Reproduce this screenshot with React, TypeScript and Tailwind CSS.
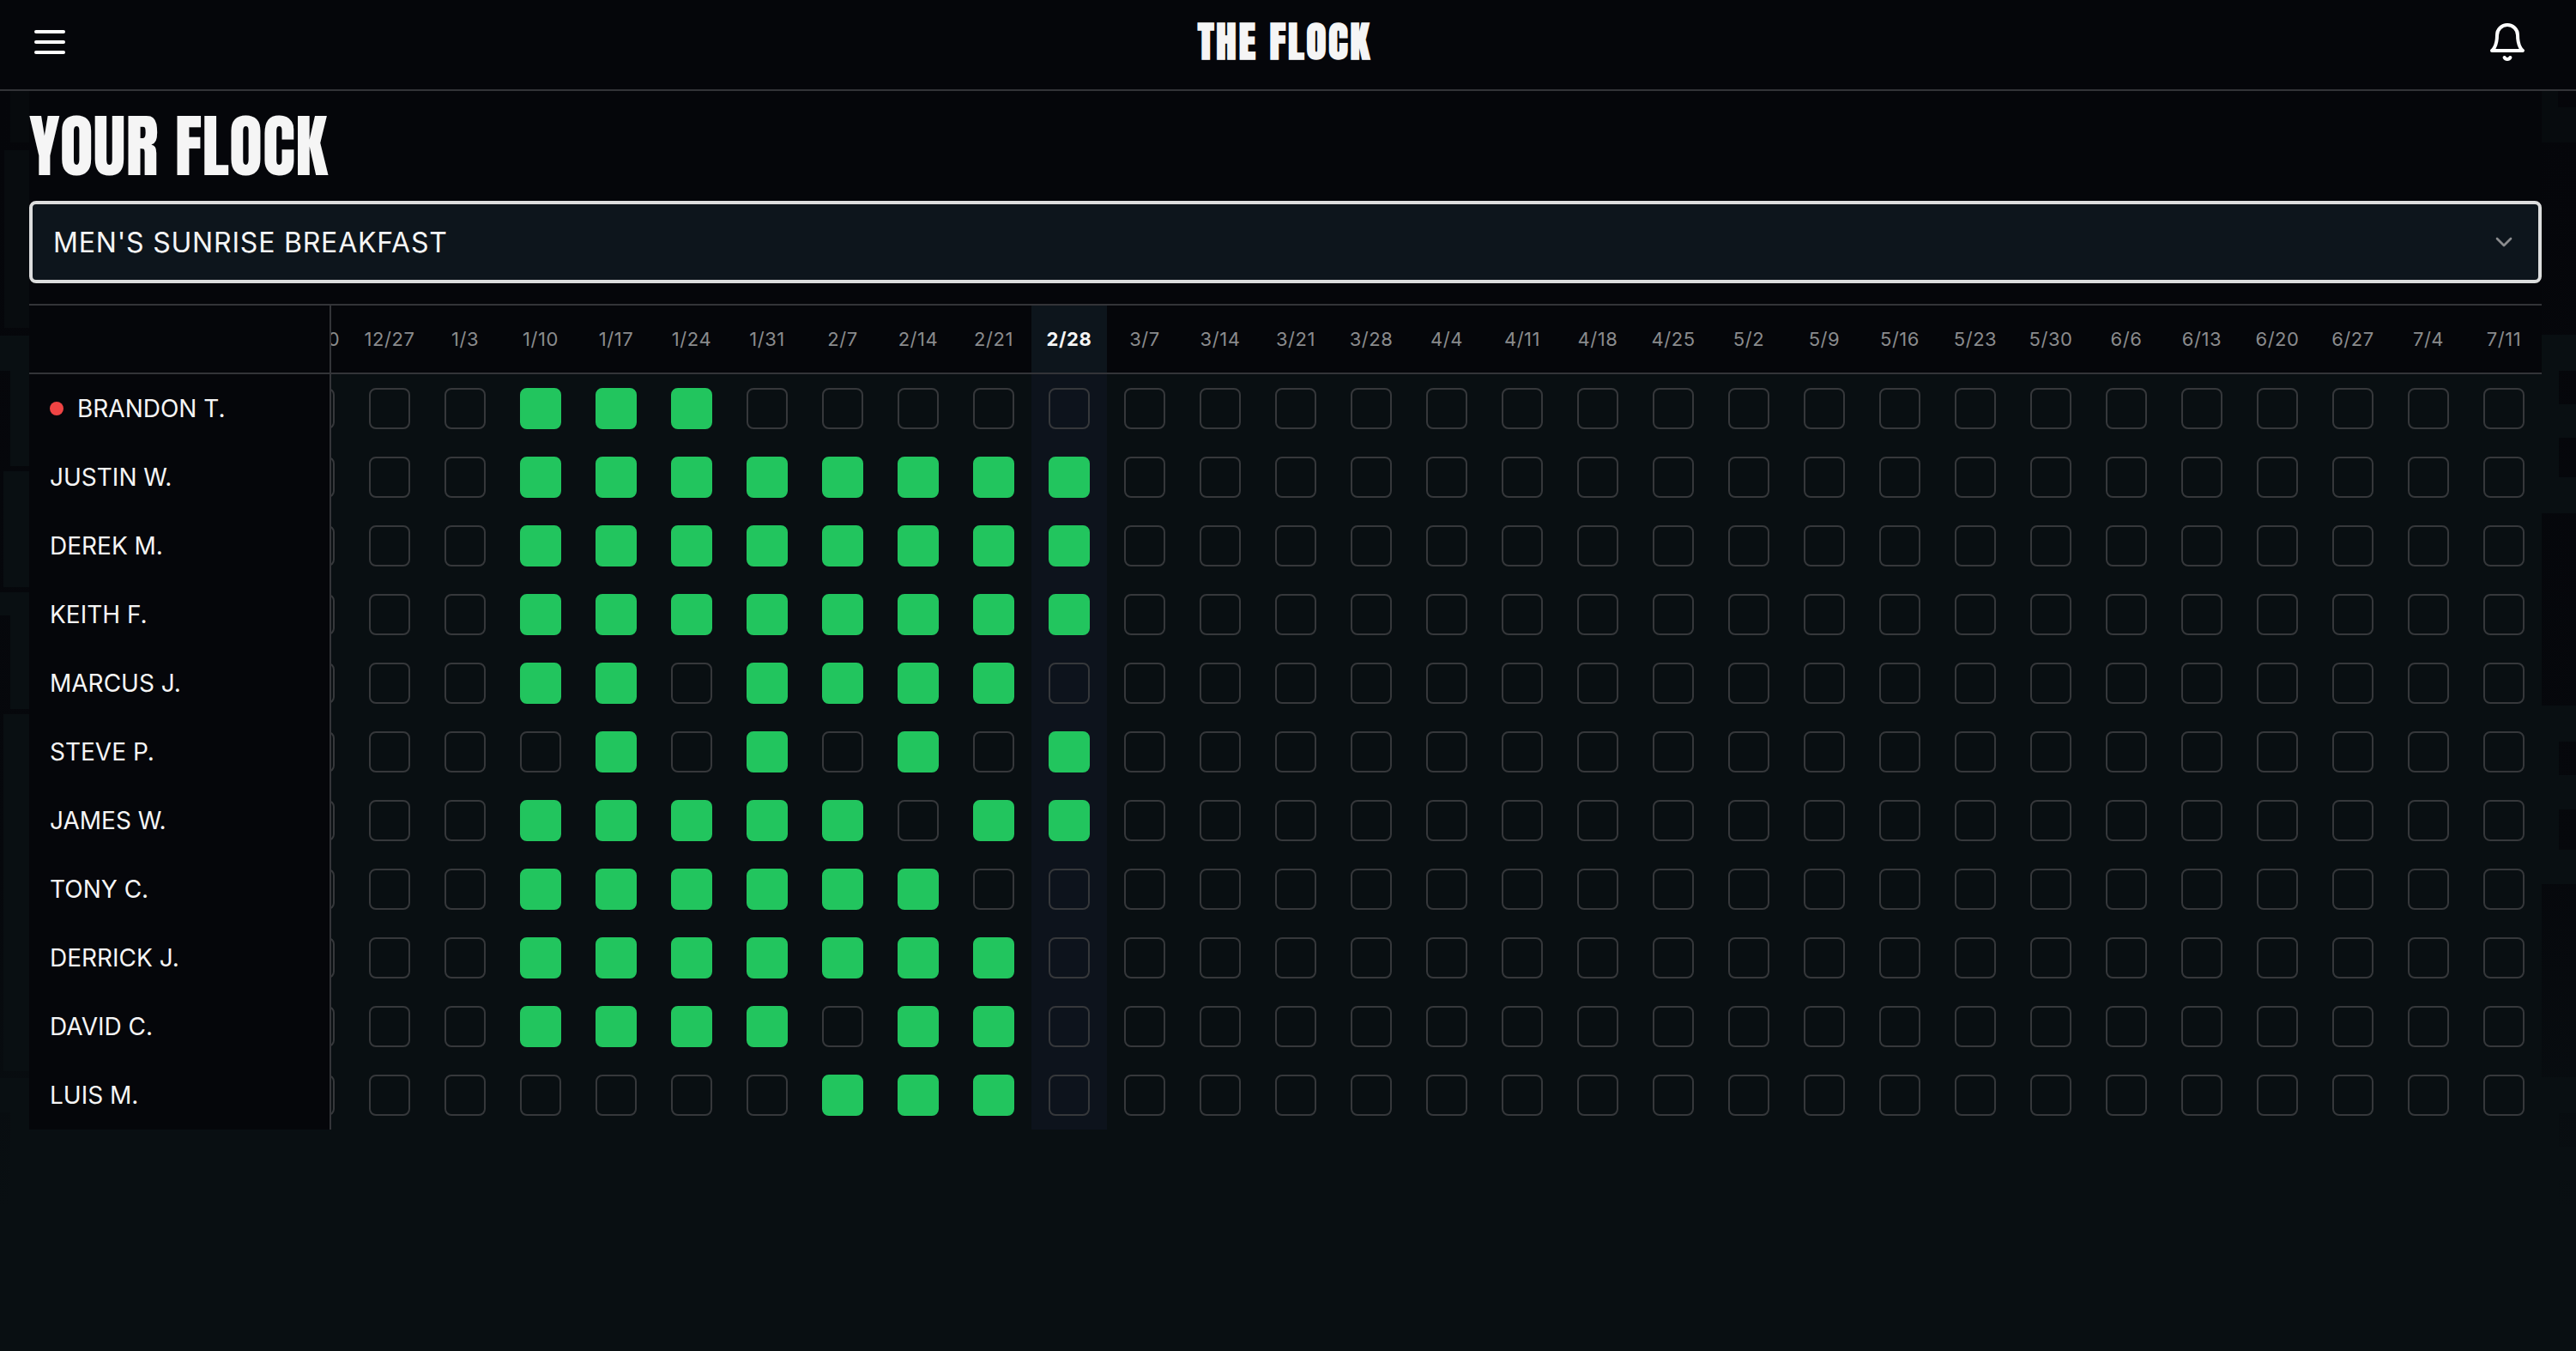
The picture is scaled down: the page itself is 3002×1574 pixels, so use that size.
import { ChevronDown } from "lucide-react";
import { useLayoutEffect, useRef, useState } from "react";

type Member = {
  name: string;
  // indexes into DATES
  weeks: number[];
  alert?: boolean;
};

const DATES = [
  "12/20", "12/27", "1/3", "1/10", "1/17", "1/24", "1/31", "2/7", "2/14", "2/21",
  "2/28", "3/7", "3/14", "3/21", "3/28", "4/4", "4/11", "4/18", "4/25", "5/2",
  "5/9", "5/16", "5/23", "5/30", "6/6", "6/13", "6/20", "6/27", "7/4", "7/11",
];

const TODAY = "2/28";

const MEMBERS: Member[] = [
  { name: "Brandon T.", weeks: [3, 4, 5], alert: true },
  { name: "Justin W.", weeks: [3, 4, 5, 6, 7, 8, 9, 10] },
  { name: "Derek M.", weeks: [3, 4, 5, 6, 7, 8, 9, 10] },
  { name: "Keith F.", weeks: [3, 4, 5, 6, 7, 8, 9, 10] },
  { name: "Marcus J.", weeks: [3, 4, 6, 7, 8, 9] },
  { name: "Steve P.", weeks: [4, 6, 8, 10] },
  { name: "James W.", weeks: [3, 4, 5, 6, 7, 9, 10] },
  { name: "Tony C.", weeks: [3, 4, 5, 6, 7, 8] },
  { name: "Derrick J.", weeks: [3, 4, 5, 6, 7, 8, 9] },
  { name: "David C.", weeks: [3, 4, 5, 6, 8, 9] },
  { name: "Luis M.", weeks: [7, 8, 9] },
];

const BellIcon = () => (
  <svg
    viewBox="0 0 24 24"
    className="size-12 text-white"
    fill="none"
    stroke="currentColor"
    strokeWidth="2"
    strokeLinecap="round"
    strokeLinejoin="round"
  >
    <path d="M6 8a6 6 0 0 1 12 0c0 7 3 9 3 9H3s3-2 3-9" />
    <path d="M10.3 21a1.94 1.94 0 0 0 3.4 0" />
  </svg>
);

// faint brick texture that shows in the page margins
const Backdrop = () => (
  <div aria-hidden="true" className="pointer-events-none absolute inset-x-0 top-[106px] flex justify-between">
    <svg width="34" height="1300" viewBox="0 0 34 1300">
      <defs>
        <linearGradient id="fade" x1="0" y1="0" x2="0" y2="1">
          <stop offset="0" stopColor="#05060a" />
          <stop offset="0.7" stopColor="#06080c" />
          <stop offset="1" stopColor="#090f12" />
        </linearGradient>
      </defs>
      <rect width="34" height="1300" fill="url(#fade)" />
      <path fill="#070a0d" d="M12 0h22v60H12z" />
      <path fill="#080c0f" d="M5 69h29v207H5z" />
      <path
        fill="#090f12"
        d="M0 285h34v152H12V326H0zM4 443h30v135H4zM0 584h34v136H12V611H0zM4 726h30v416H4zM0 1150h34v40H0zM12 1190h22v110H12z"
      />
    </svg>
    <svg width="40" height="1300" viewBox="0 0 40 1300">
      <rect width="40" height="1300" fill="url(#fade)" />
      <path fill="#070b0e" d="M0 0h19v19h21v41H0z" />
      <path
        fill="#090f12"
        d="M0 284h40v42H20v39h20v39H20v46h20v42H0zM0 716h40v42H20v39h20v40H20v47h20v40H0zM0 1149h40v42H20v39h20v39H20v31H0z"
      />
    </svg>
  </div>
);

const Header = () => (
  <header className="flex h-[106px] items-center justify-between border-b-2 border-[#333438] bg-[#05060a] pr-14 pb-1.5 pl-10">
    <button type="button" aria-label="Open menu" className="flex w-14 cursor-pointer flex-col gap-2">
      <span className="h-1 w-9 rounded-sm bg-white" />
      <span className="h-1 w-9 rounded-sm bg-white" />
      <span className="h-1 w-9 rounded-sm bg-white" />
    </button>
    <span className="font-['Anton','Liberation_Sans_Narrow','Liberation_Sans',sans-serif] text-[48px] leading-none font-bold tracking-wider text-[#f5f5f5]">
      THE FLOCK
    </span>
    <button type="button" aria-label="Notifications" className="cursor-pointer">
      <BellIcon />
    </button>
  </header>
);

const GroupSelect = () => (
  <div className="relative">
    <select
      aria-label="Group"
      className="h-24 w-full appearance-none rounded-lg border-4 border-[#dcdddd] bg-[#0d151c] px-6 pt-0.5 text-[32px] tracking-wide text-[#f5f5f5] uppercase outline-none"
    >
      <option>Men's Sunrise Breakfast</option>
    </select>
    <ChevronDown
      className="pointer-events-none absolute inset-y-0 right-7 my-auto size-8 text-[#8a8b8d]"
      strokeWidth={2}
    />
  </div>
);

const AttendanceTable = () => {
  const scroller = useRef<HTMLDivElement>(null);
  const [members, setMembers] = useState<Member[]>(MEMBERS);

  useLayoutEffect(() => {
    if (scroller.current) {
      scroller.current.scrollLeft = scroller.current.scrollWidth;
    }
  }, []);

  const toggle = (name: string, week: number) => {
    setMembers((prev) =>
      prev.map((m) =>
        m.name !== name
          ? m
          : {
              ...m,
              weeks: m.weeks.includes(week)
                ? m.weeks.filter((w) => w !== week)
                : [...m.weeks, week],
            }
      )
    );
  };

  return (
    <div ref={scroller} className="overflow-x-auto bg-[#090f12] [scrollbar-width:none]">
      <table className="w-full border-separate border-spacing-0">
        <thead>
          <tr>
            <td className="sticky left-0 z-10 h-[82px] border-y-2 border-r-2 border-[#333438] bg-[#05060a]" />
            {DATES.map((date) => (
              <th
                key={date}
                scope="col"
                className={`h-[82px] border-y-2 border-[#333438] p-0 text-[22px] tracking-wide ${
                  date === TODAY
                    ? "bg-[#0d151c] font-bold text-[#f5f5f5]"
                    : "bg-[#05060a] font-normal text-[#8a8b8d]"
                }`}
              >
                {date}
              </th>
            ))}
          </tr>
        </thead>
        <tbody>
          {members.map((member) => (
            <tr key={member.name}>
              <th
                scope="row"
                className="sticky left-0 z-10 h-20 border-r-2 border-[#333438] bg-[#05060a] p-0 text-left text-[28px] font-normal text-[#f5f5f5] uppercase"
              >
                <div className="flex w-[350px] items-center gap-4 px-6">
                  {member.alert && <span className="size-4 rounded-full bg-[#ef4444]" />}
                  {member.name}
                </div>
              </th>
              {DATES.map((date, week) => (
                <td key={date} className={`p-0 ${date === TODAY ? "bg-[#0d131c]" : ""}`}>
                  <div className="flex w-22 justify-center">
                    <input
                      type="checkbox"
                      aria-label={`${member.name} ${date}`}
                      checked={member.weeks.includes(week)}
                      onChange={() => toggle(member.name, week)}
                      className="size-12 cursor-pointer appearance-none rounded-lg border-2 border-[#36383b] checked:border-[#22c55e] checked:bg-[#22c55e]"
                    />
                  </div>
                </td>
              ))}
            </tr>
          ))}
        </tbody>
      </table>
    </div>
  );
};

const App = () => (
  <div className="relative min-h-screen bg-[#090f12] font-['Inter',sans-serif]">
    <Backdrop />
    <Header />
    <main className="relative mr-10 ml-[34px]">
      <div className="flex flex-col bg-[#05060a] pb-6">
        <h1 className="flex h-32 items-center font-['Anton','Liberation_Sans_Narrow','Liberation_Sans',sans-serif] text-[80px] leading-none font-normal text-[#f5f5f5]">
          YOUR FLOCK
        </h1>
        <GroupSelect />
      </div>
      <AttendanceTable />
    </main>
  </div>
);

export default App;
